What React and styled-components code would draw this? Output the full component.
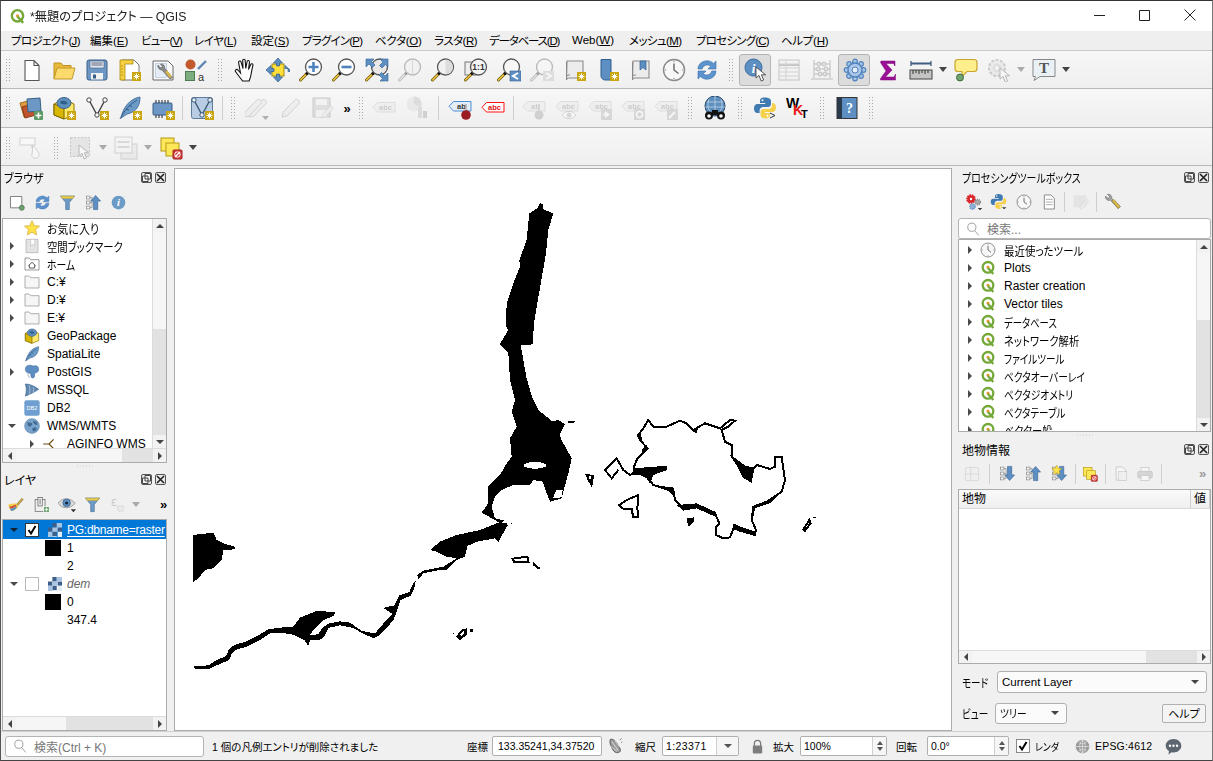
import React from "react";
import styled, { createGlobalStyle } from "styled-components";

const Global = createGlobalStyle`
  html, body { margin: 0; padding: 0; background: #f0f0f0; overflow: hidden; }
  * { box-sizing: border-box; }
  body { font-family: "Liberation Sans", "Noto Sans CJK JP", sans-serif; font-size: 12px; color: #000; font-feature-settings: "palt"; }
`;

const Win = styled.div`
  width: 1213px; height: 761px; display: flex; flex-direction: column; overflow: hidden;
  background: #f0f0f0; border-top: 1px solid #333; border-left: 1px solid #555; border-right: 1px solid #777; border-bottom: 1px solid #444;
`;
const TitleBar = styled.div`
  height: 30px; background: #fff; display: flex; align-items: center; padding-left: 8px; flex: none;
`;
const TitleText = styled.div`font-size: 12.5px; margin-left: 4px; flex: 1; color: #222; padding-bottom: 2px;`;
const WinBtn = styled.div`width: 45px; height: 30px; display: flex; align-items: center; justify-content: center; padding-bottom: 2px;`;
const MenuBar = styled.div`
  height: 20px; flex: none; display: flex; align-items: center; padding: 0 0 2px 10px; background: #efefef; border-bottom: 1px solid #c8c8c8;
`;
const MenuItem = styled.div`width: ${p => p.$w}px; font-size: 11.5px; white-space: nowrap; letter-spacing: ${p => p.$ls}px;
  u { text-underline-offset: 1px; }`;
const ToolRow = styled.div`
  height: ${p => p.$h}px; flex: none; display: flex; align-items: center; padding-top: ${p => p.$pt || 0}px;
  background: linear-gradient(#f7f7f7, #efefef); border-bottom: 1px solid #b9b9b9;
`;
const HandleBox = styled.div`width: ${p => p.$w || 14}px; height: 100%; flex: none; display: flex; align-items: center; justify-content: center;`;
const HandleDots = styled.div`
  width: 6px; height: 24px; background-image: radial-gradient(#a8a8a8 0.7px, transparent 0.9px); background-size: 3px 3px;
`;
const Btn = styled.div`
  width: ${p => p.$w || 33}px; height: 32px; flex: none; display: flex; align-items: center; justify-content: center; position: relative;
  svg { filter: ${p => p.$off ? "grayscale(1) opacity(.38)" : "none"}; }
  ${p => p.$on ? "&::before { content: ''; position: absolute; left: 0; right: 1px; top: 0; bottom: 0; background: #dcdcdc; border: 1px solid #b4b4b4; border-radius: 3px; } svg { position: relative; }" : ""}
`;
const Drop = styled.div`
  width: ${p => p.$w || 12}px; flex: none; display: flex; justify-content: center;
  &::after { content: ""; border-left: 4px solid transparent; border-right: 4px solid transparent; border-top: 5px solid ${p => p.$off ? "#aaa" : "#444"}; }
`;
const Sep = styled.div`
  width: ${p => p.$w || 8}px; height: 24px; flex: none; display: flex; justify-content: center;
  &::after { content: ""; width: 1px; height: 100%; background: #cfcfcf; }
`;
const More = styled.div`width: ${p => p.$w || 15}px; margin-left: ${p => p.$ml || 0}px; flex: none; font-size: 13px; font-weight: 700; text-align: center; color: ${p => p.$c || "#000"}; letter-spacing: -1px;`;

const Main = styled.div`
  flex: 1; min-height: 0; display: grid; grid-template-columns: 173px 778px 1fr;
`;
const Dock = styled.div`
  display: flex; flex-direction: column; min-height: 0; padding: ${p => p.$pad};
`;
const DockHead = styled.div`
  height: 20px; flex: none; display: flex; align-items: center; justify-content: space-between; padding: ${p => p.$pt || 1}px ${p => p.$pr || 1}px 0 ${p => p.$pl || 2}px; font-size: 12px;
`;
const Lbl = styled.span`display: inline-block; white-space: nowrap; transform: scaleX(${p => p.$sx || 1}); transform-origin: left center;`;
const DockBtns = styled.div`display: flex; gap: 3px; align-items: center;`;
const DockBtn = styled.div`
  width: 11px; height: 11px; border: 1px solid #555; border-radius: 2px; background: #e8e8e8; display: flex; align-items: center; justify-content: center;
`;
const PanelBar = styled.div`
  height: ${p => p.$h || 30}px; flex: none; display: flex; align-items: center; padding-left: ${p => p.$pl || 0}px;
`;
const Mini = styled.div`
  width: ${p => p.$w || 25}px; flex: none; display: flex; align-items: center; justify-content: center;
  svg { filter: ${p => p.$off ? "grayscale(1) opacity(.38)" : "none"}; }
`;
const MiniSep = styled.div`width: ${p => p.$w || 7}px; height: 20px; flex: none; display: flex; justify-content: center;
  &::after { content: ""; width: 1px; background: #cfcfcf; }`;
const TreeFrame = styled.div`
  height: ${p => p.$h}px; flex: ${p => p.$grow ? 1 : "none"}; min-height: 0; background: #fff; border: 1px solid #ababab; display: grid;
  grid-template-columns: 1fr ${p => p.$v ? "14px" : "0"}; grid-template-rows: 1fr ${p => p.$hs ? "14px" : "0"}; overflow: hidden;
`;
const TreeList = styled.div`overflow: hidden; min-width: 0; min-height: 0; padding-top: ${p => p.$pt || 0}px;`;
const Row = styled.div`
  height: 18px; display: flex; align-items: center; white-space: nowrap; position: relative;
  padding-left: ${p => p.$indent || 0}px;
  background: ${p => p.$sel ? "#0078d7" : "transparent"};
  color: ${p => p.$sel ? "#fff" : p.$dim ? "#666" : "#000"};
  font-style: ${p => p.$dim ? "italic" : "normal"};
  ${p => p.$sel ? "height: 19px;" : ""}
`;
const Caret = styled.div`
  width: ${p => p.$w || 22}px; flex: none; display: flex; justify-content: center; padding-left: ${p => p.$pl || 0}px; padding-right: ${p => p.$pr || 0}px;
  &::after {
    content: ""; display: ${p => p.$none ? "none" : "block"};
    ${p => p.$open
      ? "border-left: 4px solid transparent; border-right: 4px solid transparent; border-top: 4px solid #4a4a4a;"
      : "border-top: 4px solid transparent; border-bottom: 4px solid transparent; border-left: 4px solid #4a4a4a;"}
    ${p => p.$white ? "border-top-color: #123;" : ""}
  }
`;
const RowIcon = styled.div`width: 16px; height: 16px; flex: none; margin-right: ${p => p.$mr ?? 7}px; display: flex; align-items: center; justify-content: center;`;
const RowCheck = styled.div`
  width: 14px; height: 14px; flex: none; background: #fff; border: 1px solid ${p => p.$on ? "#333" : "#bbb"}; margin-right: 8px; display: flex; align-items: center; justify-content: center;
`;
const Swatch = styled.div`width: 16px; height: 16px; background: #000; flex: none; margin-right: 6px;`;
const SwatchGap = styled.div`width: 16px; flex: none; margin-right: 6px;`;
const Underlined = styled.span`text-decoration: underline; text-underline-offset: 2px; letter-spacing: -.25px;`;

const VBar = styled.div`
  grid-column: 2; grid-row: 1; display: flex; flex-direction: column; background: #f2f2f2; border-left: 1px solid #dcdcdc; min-height: 0;
`;
const HBar = styled.div`
  grid-column: 1 / -1; grid-row: 2; display: flex; background: #f2f2f2; border-top: 1px solid #dcdcdc; min-width: 0;
`;
const ScrollEnd = styled.div`
  flex: none; width: ${p => p.$h ? "13px" : "auto"}; height: ${p => p.$h ? "auto" : "13px"}; display: flex; align-items: center; justify-content: center;
  &::after { content: ""; ${p => ({
    up: "border-left:4px solid transparent;border-right:4px solid transparent;border-bottom:4px solid #444;",
    down: "border-left:4px solid transparent;border-right:4px solid transparent;border-top:4px solid #444;",
    left: "border-top:4px solid transparent;border-bottom:4px solid transparent;border-right:4px solid #444;",
    right: "border-top:4px solid transparent;border-bottom:4px solid transparent;border-left:4px solid #444;"
  })[p.$dir]} }
`;
const Track = styled.div`flex: ${p => p.$g}; background: ${p => p.$thumb ? "#e2e2e2" : "#f6f6f6"}; min-width: 0; min-height: 0;`;

const Canvas = styled.div`
  background: #fff; border: 1px solid #ababab; margin-top: 2px; overflow: hidden; display: flex;
`;
const Splitter = styled.div`
  height: 6px; flex: none; display: flex; justify-content: center; align-items: center;
  &::after { content: ""; width: 18px; height: 2px; background-image: radial-gradient(#aaa .6px, transparent .8px); background-size: 3px 2px; }
`;
const SearchBox = styled.div`
  height: ${p => p.$h || 21}px; width: ${p => p.$w ? p.$w + "px" : "auto"}; flex: none; margin: ${p => p.$mt || 0}px 0 0 ${p => p.$ml || 0}px; display: flex; align-items: center; gap: 7px; padding-left: 7px; background: #fff;
  border: 1px solid #b4b4b4; border-radius: 3px; color: #777; font-size: 12px; white-space: nowrap;
`;
const Table = styled.div`flex: none; height: 175px; background: #fff; border: 1px solid #ababab; display: flex; flex-direction: column;`;
const TableHead = styled.div`height: 19px; flex: none; display: flex; background: linear-gradient(#fafafa, #efefef); border-bottom: 1px solid #d8d8d8;`;
const HeadCell = styled.div`
  width: ${p => p.$w ? p.$w + "px" : "auto"}; flex: ${p => p.$w ? "none" : 1}; padding-left: 3px; border-right: 1px solid #d0d0d0; font-size: 12px; line-height: 18px;
`;
const TableBody = styled.div`flex: 1;`;
const TableScroll = styled.div`height: 13px; flex: none; display: flex; background: #f2f2f2; border-top: 1px solid #dcdcdc;`;
const FormRow = styled.div`
  flex: none; display: flex; align-items: center; height: ${p => p.$h}px;
`;
const FormLabel = styled.div`font-size: 12px; width: ${p => p.$w}px; flex: none; padding-left: 4px; white-space: nowrap;`;
const Combo = styled.div`
  width: ${p => p.$w ? p.$w + "px" : "auto"}; flex: ${p => p.$w ? "none" : 1}; height: ${p => p.$h || 22}px; background: #fbfbfb; border: 1px solid #b0b0b0; border-radius: 3px;
  display: flex; align-items: center; padding: 0 5px 0 4px; justify-content: space-between; font-size: 11.5px; margin-right: ${p => p.$mr || 0}px; white-space: nowrap;
  &::after { content: ""; border-left: 4px solid transparent; border-right: 4px solid transparent; border-top: 4px solid #444; margin-right: 2px; }
`;
const PushBtn = styled.div`
  width: 44px; height: 19px; margin-left: auto; margin-right: 5px; background: #f4f4f4; border: 1px solid #b0b0b0; border-radius: 2px; font-size: 11px; display: flex; align-items: center; justify-content: center;
`;

const StatusBar = styled.div`
  height: 29px; flex: none; display: flex; align-items: center; font-size: 10.5px; background: #f0f0f0; border-top: 1px solid #d0d0d0;
`;
const StatusText = styled.div`
  margin-left: ${p => p.$ml || 0}px; width: ${p => p.$w}px; flex: none; white-space: nowrap; letter-spacing: ${p => p.$ls || 0}px;
`;
const Field = styled.div`
  width: ${p => p.$w}px; height: 20px; flex: none; margin-left: ${p => p.$ml || 0}px; background: #fff; border: 1px solid #b0b0b0; border-radius: 2px; display: flex; align-items: center; justify-content: space-between;
  padding-left: ${p => p.$pl || 3}px; letter-spacing: ${p => p.$ls || 0}px; font-size: 10.5px; white-space: nowrap; overflow: hidden;
`;
const Spin = styled.div`
  width: 14px; height: 100%; border-left: 1px solid #d0d0d0; display: flex; flex-direction: column; align-items: center; justify-content: center; gap: 2px; background: #f6f6f6;
  &::before { content: ""; border-left: 3.5px solid transparent; border-right: 3.5px solid transparent; border-bottom: 4px solid #555; }
  &::after { content: ""; border-left: 3.5px solid transparent; border-right: 3.5px solid transparent; border-top: 4px solid #555; }
`;
const FieldDrop = styled.div`
  width: 22px; height: 100%; border-left: 1px solid #d0d0d0; display: flex; align-items: center; justify-content: center; background: #f6f6f6;
  &::after { content: ""; border-left: 4px solid transparent; border-right: 4px solid transparent; border-top: 4px solid #555; }
`;
const StatusIcon = styled.div`width: ${p => p.$w}px; margin-left: ${p => p.$ml || 0}px; flex: none; display: flex; justify-content: center; align-items: center;`;
const StatusCheck = styled.div`
  width: 14px; height: 14px; margin-left: ${p => p.$ml || 0}px; flex: none; background: #fff; border: 1px solid #888; display: flex; align-items: center; justify-content: center;
`;

/* ---------- icons ---------- */
const B = ({ x = 15, y = 15 }) => (
  <g>
    <rect x={x} y={y} width="9" height="9" fill="#c9a50f" />
    <path d={`M${x + 4.5} ${y + 1.5}v6M${x + 1.5} ${y + 4.5}h6M${x + 2.4} ${y + 2.4}l4.2 4.2M${x + 6.6} ${y + 2.4}l-4.2 4.2`} stroke="#fff" strokeWidth="1" />
  </g>
);
const Glass = ({ children, fill = "#f4f4f4" }) => (
  <g>
    <path d="M8 15.5L1.5 22" stroke="#6b5a14" strokeWidth="3" strokeLinecap="round" />
    <path d="M8 15.5L1.5 22" stroke="#f2c53c" strokeWidth="1.6" strokeLinecap="round" />
    <circle cx="8" cy="15.5" r="1.6" fill="#111" />
    <circle cx="14.5" cy="9" r="8" fill={fill} stroke="#555" strokeWidth="1.3" />
    {children}
  </g>
);
const Tag = ({ fill = "#e8e8dc", stroke = "#b9b9a6", txt = "abc", col = "#888" }) => (
  <g>
    <path d="M5.5 2.500H23v9.500H5.500L1 7.300z" fill={fill} stroke={stroke} />
    <text x="13.5" y="10" fontSize="7.500" fontWeight="700" textAnchor="middle" fill={col} fontFamily="Liberation Sans">{txt}</text>
  </g>
);
const LowTag = (props) => <g transform="translate(0 3)"><Tag {...props} /></g>;
const Q = () => (
  <g>
    <circle cx="12" cy="11" r="8" fill="#fff" stroke="#74a838" strokeWidth="3.4" />
    <circle cx="12" cy="11" r="2.2" fill="#e8962e" />
    <path d="M12 12l8 9" stroke="#74a838" strokeWidth="3.4" />
  </g>
);
const Clock = () => (
  <g>
    <circle cx="12" cy="12" r="10.5" fill="#f7f7f7" stroke="#8a8a8a" strokeWidth="1.4" />
    <path d="M12 5.5V12l4.5 3.5" fill="none" stroke="#666" strokeWidth="1.4" />
    <path d="M12 2.8v1.4M12 19.8v1.4M2.8 12h1.4M19.8 12h1.4" stroke="#8a8a8a" />
  </g>
);
const Refresh = () => (
  <g fill="#5c93cf" stroke="#3a6ea8" strokeWidth=".6">
    <path d="M3 11C3 5 9 2 14 3c2 .4 3.5 1.4 4.4 2.4L21 3v8h-8l2.6-2.8C14.8 7.4 13.6 7 12.3 7 9.6 7 7.8 8.7 7.2 11z" />
    <path d="M21 13c0 6-6 9-11 8-2-.4-3.5-1.4-4.4-2.4L3 21v-8h8l-2.6 2.8c.8.8 2 1.2 3.3 1.2 2.7 0 4.5-1.7 5.1-4z" />
  </g>
);
const Funnel = () => (
  <g>
    <path d="M2 3h20l-7.5 9v10h-5V12z" fill="#6d9bc7" stroke="#46709a" />
    <path d="M2 3h20l-2.6 3.2H4.6z" fill="#f2d04c" stroke="#b79b2a" strokeWidth=".6" />
  </g>
);
const Python = () => (
  <g>
    <path d="M12 1.5c-4 0-5 1.4-5 3.4V7h5.2v1H4.4C2.4 8 1 9.6 1 12.5S2.4 17 4.4 17h2.2v-2.6c0-2 1.7-3.4 3.6-3.4h5c1.7 0 2.8-1.2 2.8-2.9V4.9C18 2.9 16 1.5 12 1.5z" fill="#3f7ab0" />
    <circle cx="9.5" cy="4.2" r="1" fill="#fff" />
    <path d="M12 22.5c4 0 5-1.4 5-3.4V17h-5.2v-1h7.8c2 0 3.4-1.6 3.4-4.5S21.6 7 19.6 7h-.6v2.6c0 2-1.7 3.4-3.6 3.4h-5c-1.7 0-2.8 1.2-2.8 2.9v3.2c0 2 2 3.4 6 3.4z" fill="#f5d04a" />
    <circle cx="14.5" cy="19.8" r="1" fill="#fff" />
  </g>
);
const Cursor = ({ x = 12, y = 10 }) => (
  <path transform={`translate(${x} ${y})`} d="M0 0v11l3-2.6L5.2 14l2.4-1-2.2-5.2H9.6z" fill="#fff" stroke="#444" strokeWidth=".9" />
);
const Lines = ({ stroke = "#888" }) => (
  <g stroke={stroke} fill="none"><path d="M3 6h18M3 10h18M3 14h18M3 18h18M9 3v18" /></g>
);
const Map2 = () => (
  <g>
    <path d="M4 3h16v17H6c-2 0-2.500 1-2.500 2z" fill="#ececec" stroke="#8a8a8a" strokeWidth="1.1" />
    <path d="M3.500 22V4M3.500 19c0-1.500 1-2 2.500-2h1" fill="none" stroke="#888" />
  </g>
);
const Doc = () => <path d="M5 1.5h10l5 5v16H5z" fill="#fff" stroke="#666" strokeWidth="1.1" />;
const Raster = ({ a = "#3d72ad", b = "#a9c5e2" }) => (
  <g>
    <path d="M0 5h5v5H0zM5 0h5v5H5zM5 10h5v5H5zM11 5h5v5h-5zM11 15h-1" fill={a} />
    <path d="M10 0h6v5h-6zM0 10h5v6H0zM5 5h6v5H5z" fill={b} />
    <path d="M5 15h5v1H5zM11 10h5v6h-5z" fill="#e4edf6" />
  </g>
);
const Db = ({ c = "#d9b600" }) => (
  <g>
    <path d="M2 8l10-5 10 5v11l-10 4-10-4z" fill="#ffe96d" stroke="#8a7400" />
    <path d="M2 8l10 4v11l-10-4z" fill={c} stroke="#7a6600" />
    <ellipse cx="12" cy="7" rx="7" ry="5.5" fill="#5f8fbd" stroke="#3b6590" />
    <path d="M8 5c2 1 3-1 5 0s3 2 2 3-4 0-6 0z" fill="#2e5f8c" />
  </g>
);
const Feather = () => (
  <g>
    <path d="M3 22C5 12 11 3 22 1c0 8-3 15-13 17z" fill="#6d9bc7" stroke="#3f6b97" strokeWidth=".9" />
    <path d="M2 23C6 15 11 9 19 4M8 13l3 1M11 9l3 2" fill="none" stroke="#2c5480" strokeWidth=".9" />
  </g>
);
const Vee = ({ c = "#444", f = "#fff" }) => (
  <g>
    <path d="M4 4l8 15 8-15" fill="none" stroke={c} strokeWidth="1.4" />
    <circle cx="4" cy="4" r="2.2" fill={f} stroke={c} />
    <circle cx="12" cy="19" r="2.2" fill={f} stroke={c} />
    <circle cx="20" cy="4" r="2.2" fill={f} stroke={c} />
  </g>
);
const Leaf = () => (
  <g>
    <path d="M4 21L20 5" stroke="#aaa" strokeWidth="1" />
    <path d="M4 21l1.2-5L17 3.8c1-.8 2.5-.5 3.5.5s1.2 2.4.4 3.4L9 20z" fill="#e3e3e3" stroke="#999" />
  </g>
);
const DbTree = () => (
  <g stroke="#888" fill="#f7f7f7"><rect x="2" y="3" width="5" height="4" /><rect x="2" y="10" width="5" height="4" /><rect x="2" y="17" width="5" height="4" /><path fill="none" d="M7 5h3M7 12h3M7 19h3M10 5v14" /></g>
);
const ArrowUp = () => <path d="M15 2l7 8h-4v12h-6V10H8z" fill="#5e8fc3" stroke="#2f5e91" strokeWidth=".8" />;
const ArrowDown = () => <path d="M15 22l7-8h-4V2h-6v12H8z" fill="#5e8fc3" stroke="#2f5e91" strokeWidth=".8" />;
const Squares = () => (
  <g>
    <rect x="2" y="2" width="13" height="13" fill="#ffe75a" stroke="#b39a10" />
    <rect x="7" y="7" width="13" height="13" fill="#ffe75a" stroke="#b39a10" />
    <rect x="14" y="14" width="9" height="9" rx="1" fill="#d53a3a" stroke="#a02020" />
    <path d="M16 21l5-5" stroke="#fff" strokeWidth="1.5" />
    <circle cx="18.5" cy="18.5" r="2.7" fill="none" stroke="#fff" />
  </g>
);

const I = {
  win: <Q />,
  new: <path d="M6 2.5h9l5 5v15H6z M15 2.5v5h5" fill="#fff" stroke="#555" strokeWidth="1.1" />,
  open: (
    <g>
      <path d="M2 21V5h7l2 2.5h8V11" fill="#e8b93a" stroke="#bd9222" />
      <path d="M2 21l3-11h18l-3 11z" fill="#fbd96a" stroke="#c29a2a" />
    </g>
  ),
  save: (
    <g>
      <rect x="2" y="2" width="20" height="20" rx="2" fill="#6f97c4" stroke="#3a5f87" />
      <path d="M5 3h14v7H5z" fill="#dfe7f0" stroke="#3a5f87" strokeWidth=".6" />
      <path d="M6.5 5h11M6.5 7h11" stroke="#667" />
      <path d="M6 15h12v6.5H6z" fill="#f2f2f2" />
      <path d="M8 16.5h3v4H8z" fill="#3a5f87" />
    </g>
  ),
  layout: (
    <g>
      <path d="M4 2h12l5 5v15H4z" fill="#fff" stroke="#777" />
      <path d="M2 2h13v4H7v16H2z" fill="#f5d03f" stroke="#a98b10" strokeWidth=".8" />
      <path d="M3 8h2M3 11h2M3 14h2M3 17h2" stroke="#a98b10" strokeWidth=".8" />
      <B x={14} y={14} />
    </g>
  ),
  mgr: (
    <g>
      <path d="M2 3h15l5 5v14H2z" fill="#fafafa" stroke="#666" />
      <path d="M4.500 5.500h11v14h-11z" fill="#e4edf6" stroke="#aabbcc" strokeWidth=".6" />
      <path d="M7 7a4 4 0 0 0 4 5l8 9 2.500-1.500L13.500 10c.5-2-1-4.500-4-4l2 2.500-1.500 1.500L7.500 8z" fill="#8a8a8a" stroke="#444" strokeWidth=".5" />
      <path d="M14 14l5 6 2-1.200-4.600-6.200z" fill="#d9b84a" />
    </g>
  ),
  style: (
    <g>
      <circle cx="6.500" cy="6.500" r="5" fill="#c25a2e" />
      <path d="M14 11l8-8" stroke="#5b86b3" strokeWidth="2.400" />
      <rect x="1.500" y="13.500" width="9" height="9" fill="#7bad7f" stroke="#4d7a52" />
      <text x="17" y="23" fontSize="11" textAnchor="middle" fill="#333" fontFamily="Liberation Sans">a</text>
    </g>
  ),
  hand: <path d="M9.500 23C8 20.500 4 16 2.500 13.500c-1-1.600 1.400-2.800 2.500-1.500L7.500 15 5.600 4.600c-.3-1.700 2-2.200 2.500-.5l1.900 6.400-.3-8c0-1.700 2.400-1.700 2.500 0l.6 8 1.300-7c.3-1.700 2.500-1.200 2.400.4l-1 7.600 2.200-5c.7-1.400 2.600-.7 2.200.8-.7 3-1.500 6.600-1.800 9-.3 2.400-1 4.100-2 6.700z" fill="#fff" stroke="#111" strokeWidth="1.100" />,
  pansel: (
    <g>
      <rect x="6" y="6" width="12" height="12" fill="#ffdf3a" stroke="#9d8a10" />
      <g fill="#5e8fc3" stroke="#2f5e91" strokeWidth=".7">
        <path d="M12 0l4.500 5h-3v3h-3V5h-3zM12 24l4.500-5h-3v-3h-3v3h-3zM0 12l5-4.500v3h3v3H5v3zM24 12l-5-4.500v3h3v3h3v3z" />
      </g>
    </g>
  ),
  zin: <Glass fill="#fff"><path d="M14.500 4v10M9.500 9h10" stroke="#4f82bd" strokeWidth="2.600" /></Glass>,
  zout: <Glass fill="#fff"><path d="M9.500 9h10" stroke="#4f82bd" strokeWidth="2.600" /></Glass>,
  zfull: (
    <g>
      <Glass fill="#e8e8e8" />
      <g fill="#5e8fc3" stroke="#2f5e91" strokeWidth=".6">
        <path d="M1 1h8L6.500 3.500 10 7l-2.500 2.500L4 6 1 9zM23 1v8l-2.500-2.500L17 10l-2.500-2.500L18 4l-3-3zM23 23h-8l2.500-2.500L14 17l2.500-2.500L20 18l3-3z" />
      </g>
    </g>
  ),
  zsel: <Glass fill="#eee"><path d="M14.500 1v16" stroke="#aaa" /></Glass>,
  zlayer: <Glass fill="#f2f2f2"><path d="M14.500 1.500a7.500 7.500 0 0 1 0 15z" fill="#ddd" /></Glass>,
  znat: (
    <g>
      <rect x="1" y="4" width="11" height="13" fill="#eee" stroke="#777" />
      <Glass fill="#f4f4f4"><text x="14.500" y="12" fontSize="8.500" fontWeight="700" textAnchor="middle" fill="#333" fontFamily="Liberation Sans">1:1</text></Glass>
    </g>
  ),
  zlast: (
    <g>
      <Glass fill="#f7f7f7" />
      <rect x="13" y="13" width="11" height="10" fill="#5e8fc3" stroke="#2f5e91" strokeWidth=".6" />
      <path d="M21 15l-5 3 5 3" fill="none" stroke="#fff" strokeWidth="2" />
    </g>
  ),
  znext: (
    <g>
      <Glass fill="#f7f7f7" />
      <rect x="13" y="13" width="11" height="10" fill="#bbb" />
      <path d="M16 15l5 3-5 3" fill="none" stroke="#fff" strokeWidth="2" />
    </g>
  ),
  newmap: <g><Map2 /><B x={14} y={14} /></g>,
  newbm: (
    <g>
      <path d="M5 1.500h10v17L19 22H9c-2 0-4-2-4-4z" fill="#5e8fc3" stroke="#2f5e91" />
      <B x={14} y={14} />
    </g>
  ),
  showbm: (
    <g>
      <Map2 />
      <path d="M11 3h6v9l-3-2.500L11 12z" fill="#5e8fc3" stroke="#2f5e91" strokeWidth=".7" />
    </g>
  ),
  clock: <Clock />,
  refresh: <Refresh />,
  identify: (
    <g>
      <circle cx="9.500" cy="9.500" r="8.500" fill="#5e8fc3" stroke="#3b6b9e" />
      <text x="9.500" y="14.500" fontSize="13" fontWeight="700" fontStyle="italic" textAnchor="middle" fill="#fff" fontFamily="Liberation Serif">i</text>
      <Cursor x={12} y={9} />
    </g>
  ),
  table: (
    <g>
      <rect x="2" y="2" width="20" height="20" fill="#f2f2f2" stroke="#777" />
      <path d="M2 7h20" stroke="#777" strokeWidth="2" />
      <Lines stroke="#999" />
    </g>
  ),
  abacus: (
    <g fill="none" stroke="#666">
      <path d="M4 2v18M20 2v18M1 21h22M4 6h16M4 11h16M4 16h16" />
      <g fill="#ccc"><circle cx="9" cy="6" r="2" /><circle cx="14" cy="6" r="2" /><circle cx="8" cy="11" r="2" /><circle cx="16" cy="11" r="2" /><circle cx="10" cy="16" r="2" /><circle cx="15" cy="16" r="2" /></g>
    </g>
  ),
  gear: (
    <g>
      <g fill="#a9c6e8" stroke="#4f82bd" strokeWidth="1.200">
        <circle cx="12" cy="3.500" r="2.300" /><circle cx="12" cy="20.500" r="2.300" /><circle cx="3.500" cy="12" r="2.300" /><circle cx="20.500" cy="12" r="2.300" />
        <circle cx="6" cy="6" r="2.300" /><circle cx="18" cy="6" r="2.300" /><circle cx="6" cy="18" r="2.300" /><circle cx="18" cy="18" r="2.300" />
      </g>
      <circle cx="12" cy="12" r="7" fill="#a9c6e8" stroke="#4f82bd" strokeWidth="1.300" />
      <circle cx="12" cy="12" r="3" fill="#e6eef7" stroke="#4f82bd" />
    </g>
  ),
  sigma: <path d="M5 3h14v5l-1.500-2.500H10l6 6.500-6.500 7H18l1.500-3V22H4.500v-1.500L10 13 4.500 4.500z" fill="#9b0f96" stroke="#7a0b76" strokeWidth=".5" />,
  ruler: (
    <g>
      <path d="M2 3v5M22 3v5" stroke="#3f5c7e" strokeWidth="1.300" /><path d="M2 5.500h20" stroke="#3f5c7e" strokeWidth="2" />
      <rect x="1" y="12" width="22" height="9" fill="#c4c4c4" stroke="#444" />
      <path d="M4 12v4M7 12v3M10 12v4M13 12v3M16 12v4M19 12v3" stroke="#333" />
    </g>
  ),
  note: (
    <g>
      <path d="M4 1.500h16c2 0 3 1 3 3v6c0 2-1 3-3 3h-7l-5 5v-5H4c-2 0-3-1-3-3v-6c0-2 1-3 3-3z" fill="#ffee8c" stroke="#c9a52c" strokeWidth="1.200" />
      <circle cx="6" cy="19.500" r="3.500" fill="#6fa36f" stroke="#3f6b3f" />
    </g>
  ),
  action: (
    <g>
      <circle cx="10" cy="10" r="8" fill="#ddd" stroke="#888" strokeDasharray="3 1.500" strokeWidth="2" />
      <circle cx="10" cy="10" r="4.500" fill="#bbb" />
      <path d="M8.500 7.500v5l4-2.500z" fill="#fff" />
      <Cursor x={13} y={10} />
    </g>
  ),
  textnote: (
    <g>
      <path d="M1 1.500h22v17H8l-6 4 1.500-4H1z" fill="#eaf1f5" stroke="#888" />
      <text x="12" y="15" fontSize="15" fontWeight="700" textAnchor="middle" fill="#555" fontFamily="Liberation Serif">T</text>
    </g>
  ),
  dsm: (
    <g>
      <path d="M1 7l12-3 4 14-12 3z" fill="#e19a3c" stroke="#9f6a1f" />
      <path d="M3 11l11-3 3 11-11 3z" fill="#c0552d" stroke="#8a3a1c" />
      <path d="M8 3l13-1 1 13-13 1z" fill="#6d97c4" stroke="#3a5f87" />
      <rect x="15" y="15" width="9" height="9" rx="1" fill="#5d9a63" />
      <path d="M19.500 16.500v6M16.500 19.500h6" stroke="#fff" strokeWidth="1.600" />
    </g>
  ),
  gpkg: <g><Db /><B /></g>,
  shp: <g><Vee /><B /></g>,
  feather: <g><Feather /><B /></g>,
  chip: (
    <g>
      <rect x="2" y="7" width="19" height="12" rx="1" fill="#6d97c4" stroke="#3a5f87" />
      <path d="M5 4v3M8 4v3M11 4v3M14 4v3M17 4v3M5 19v3M8 19v3M11 19v3" stroke="#334" strokeWidth="1.100" />
      <B />
    </g>
  ),
  vedit: (
    <g>
      <rect x="1.500" y="1.500" width="21" height="21" rx="2" fill="#b8cde4" stroke="#5e7d9e" />
      <Vee c="#3d5a78" f="#e6eef7" />
      <B />
    </g>
  ),
  pencils: <g><Leaf /><g transform="translate(-5 0)"><Leaf /></g><path d="M17 20h7l-3.500 4z" fill="#444" /></g>,
  pencil: <Leaf />,
  saveedit: (
    <g>
      <rect x="2" y="2" width="17" height="19" fill="#bbb" stroke="#888" />
      <rect x="5" y="3" width="11" height="6" fill="#eee" />
      <path d="M5 14h11v7H5z" fill="#eee" />
      <g transform="translate(8 8) scale(.65)"><Leaf /></g>
    </g>
  ),
  abc: <g transform="translate(0 4)"><Tag /></g>,
  pie: (
    <g>
      <circle cx="9" cy="8" r="7.500" fill="#d8d8c8" />
      <path d="M9 8V.500A7.500 7.500 0 0 1 16 11z" fill="#aeb9a5" />
      <rect x="13" y="11" width="4" height="11" fill="#b8b8b8" /><rect x="18" y="15" width="4" height="7" fill="#999" />
    </g>
  ),
  abpin: (
    <g>
      <LowTag fill="#e2edf8" stroke="#4f8fd6" txt="ab" col="#333" />
      <path d="M18 8v8" stroke="#aaa" strokeWidth="1.500" />
      <circle cx="18" cy="19" r="4.800" fill="#9c1c24" />
    </g>
  ),
  abcred: <g transform="translate(0 4)"><Tag fill="#fff" stroke="#ff1010" col="#e01010" /></g>,
  lblpin: <g><LowTag txt="ab" /><path d="M17 8v8" stroke="#999" strokeWidth="1.500" /><circle cx="17" cy="19" r="4.500" fill="#999" /></g>,
  lbleye: <g><LowTag /><path d="M7 19c4-5 10-5 14 0-4 5-10 5-14 0z" fill="#fff" stroke="#999" /><circle cx="14" cy="19" r="2.500" fill="#aaa" /></g>,
  lblmove: <g><LowTag /><rect x="13" y="13" width="11" height="11" fill="#aaa" /><path d="M15 18.500h4M17 16l3.500 2.500L17 21" stroke="#fff" strokeWidth="1.600" fill="none" /></g>,
  lblrot: <g><LowTag /><rect x="13" y="13" width="11" height="11" fill="#aaa" /><circle cx="18.500" cy="18.500" r="3" fill="none" stroke="#fff" strokeWidth="1.500" /></g>,
  lbledit: <g><LowTag /><rect x="13" y="13" width="11" height="11" fill="#aaa" /><path d="M15 22l6-6" stroke="#fff" strokeWidth="2" /></g>,
  binoc: (
    <g>
      <circle cx="12" cy="10" r="10" fill="#5f8fbd" stroke="#24476b" />
      <path d="M4 6h16M2 11h20M12 0v17M6 3c-2 6-1 10 2 14M18 3c2 6 1 10-2 14" stroke="#bcd2e8" strokeWidth=".8" fill="none" />
      <circle cx="6" cy="19.500" r="4" fill="#111" /><circle cx="18" cy="19.500" r="4" fill="#111" />
      <circle cx="6" cy="20" r="1.800" fill="#fff" /><circle cx="18" cy="20" r="1.800" fill="#fff" />
      <rect x="9" y="14" width="6" height="5" fill="#111" />
    </g>
  ),
  python: <g><Python /><path d="M17 17l5 2.500-5 2.500" stroke="#333" fill="none" /></g>,
  wkt: (
    <g fontFamily="Liberation Sans" fontWeight="700">
      <text x="0" y="12" fontSize="14" fill="#000">W</text>
      <text x="7" y="19" fontSize="14" fill="#e81818">K</text>
      <text x="15" y="22" fontSize="11" fill="#000">T</text>
    </g>
  ),
  help: (
    <g>
      <rect x="2" y="1.500" width="20" height="21" fill="#5e8fc3" stroke="#333" />
      <rect x="2" y="1.500" width="5" height="21" fill="#2b3a4a" />
      <text x="14.500" y="17" fontSize="14" fontWeight="700" textAnchor="middle" fill="#fff" fontFamily="Liberation Serif">?</text>
    </g>
  ),
  rectpick: (
    <g>
      <rect x="1" y="2" width="15" height="7" fill="#fff" stroke="#999" />
      <path d="M14 9l5 7c2 2 1 5-1 6-3 1-6-1-5-4z" fill="#fff" stroke="#999" />
      <path d="M13 9v3" stroke="#7070c0" />
    </g>
  ),
  select: (
    <g>
      <rect x="1.500" y="1.500" width="19" height="19" fill="#ccc" stroke="#777" strokeDasharray="2 1.500" />
      <Cursor x={10} y={9} />
    </g>
  ),
  form: (
    <g>
      <rect x="7" y="8" width="16" height="15" fill="#ddd" stroke="#999" />
      <rect x="1" y="1" width="17" height="16" fill="#f2f2f2" stroke="#999" />
      <path d="M3.500 6h12M3.500 11h12" stroke="#aaa" strokeWidth="2" />
    </g>
  ),
  deselect: <Squares />,
  add: (
    <g>
      <path d="M3.500 3.500h16v16h-16z" fill="#fff" stroke="#777" strokeWidth="1.300" />
      <circle cx="19.500" cy="19.500" r="3.500" fill="#6fa36f" stroke="#3f6b3f" />
    </g>
  ),
  filter: <Funnel />,
  collapse: <g><DbTree /><ArrowUp /></g>,
  expand: <g><DbTree /><ArrowDown /></g>,
  info: (
    <g>
      <circle cx="12" cy="12" r="11" fill="#6d9bc7" />
      <text x="12" y="18" fontSize="17" fontWeight="700" fontStyle="italic" textAnchor="middle" fill="#fff" fontFamily="Liberation Serif">i</text>
    </g>
  ),
  star: <path d="M12 1l3.300 7.400 8 .8-6 5.300 1.800 8L12 18.300 4.900 22.500l1.800-8-6-5.300 8-.8z" fill="#ffe24a" stroke="#c9a52c" />,
  bookmark: <g><path d="M3 2h18v20H3z" fill="#e4e4e4" stroke="#aaa" /><path d="M10 2h6v10l-3-2.500L10 12z" fill="#fff" stroke="#99a" strokeWidth=".6" /></g>,
  home: (
    <g>
      <path d="M1.500 5.500V21h21V5.500H10L8 3H1.500z" fill="#fff" stroke="#666" />
      <path d="M6.500 14.500l5.500-5 5.500 5M8 13.500V18h8v-4.500" fill="none" stroke="#333" strokeWidth="1.200" />
    </g>
  ),
  folder: <path d="M1.500 21V3H8l2 2.500h12.500V21z" fill="#f6f6f6" stroke="#8a8a8a" />,
  geopkg: <Db />,
  spatial: <Feather />,
  pg: (
    <g fill="#5e8fc3" stroke="#2f5e91" strokeWidth=".7">
      <path d="M2 8c0-5 4-7 8-6 2 .5 3 1 4 1 3-1 8-1 8 5 0 4-3 6-6 5v5c0 3-4 4-5 2-1-2-1-5-1-7-3 2-8 0-8-5z" />
      <path d="M6 15c0 3 1 5 3 5" fill="none" />
    </g>
  ),
  mssql: (
    <g>
      <path d="M2 3c6 0 14 3 20 8-6 4-14 8-20 10 2-6 2-12 0-18z" fill="#6089b3" stroke="#3c6288" />
      <path d="M8 5c1 4 1 9 0 14M14 8c.6 2 .6 5 0 8" stroke="#c5d5e5" fill="none" />
    </g>
  ),
  db2: (
    <g>
      <rect x="0.500" y="0.500" width="23" height="23" rx="3" fill="#6f9fd0" />
      <text x="12" y="15" fontSize="8.500" textAnchor="middle" fill="#fff" fontFamily="Liberation Sans">DB2</text>
    </g>
  ),
  wms: (
    <g>
      <circle cx="12" cy="12" r="11" fill="#7ba4cc" stroke="#567ea6" />
      <path d="M5 6c3 2 5 0 7 2s-2 5-4 5-3-3-3-7zM14 4c3 0 6 2 6 5s-3 1-4 0-3-3-2-5zM13 15c3-1 6-1 6 1s-3 5-5 4-2-4-1-5z" fill="#3f6a93" />
    </g>
  ),
  wmsitem: <path d="M2 12h10M12 12l8-8M12 12l8 8" stroke="#6b4a10" strokeWidth="2" fill="none" />,
  rasterB: <g transform="scale(1.500)"><Raster a="#3f5f8a" b="#a9c5e2" /></g>,
  q: <Q />,
  brush: (
    <g>
      <path d="M13 12l8-9 2 2-8 9z" fill="#c8a24a" stroke="#846a20" strokeWidth=".6" />
      <path d="M2 12c4-1 8-2 11-1l3 4c-2 3-6 6-10 6-2-2-4-6-4-9z" fill="#f2cf46" />
      <path d="M3 15c3 0 6-1 9-3l1.500 2c-3 2-6 3-9 3.500z" fill="#d04a3f" />
      <path d="M4 18c3-.5 6-2 9-3l1 1c-2 3-5 5-8 5z" fill="#5e8fc3" />
    </g>
  ),
  clip: (
    <g>
      <rect x="3" y="5" width="14" height="17" fill="#eee" stroke="#666" />
      <rect x="7" y="2" width="6" height="12" fill="#fff" stroke="#555" />
      <rect x="9" y="4" width="2" height="8" fill="#999" />
      <rect x="15" y="15" width="8" height="8" fill="#6fa36f" stroke="#fff" />
      <path d="M19 16.500v5M16.500 19h5" stroke="#fff" strokeWidth="1.200" />
    </g>
  ),
  eye: (
    <g>
      <path d="M0 11c6-8 16-8 23 0-7 8-17 8-23 0z" fill="#dcdcdc" stroke="#888" />
      <circle cx="11.500" cy="10.500" r="5" fill="#5e8fc3" stroke="#2f5e91" />
      <circle cx="11.500" cy="10.500" r="2" fill="#123" />
      <path d="M17 19h7l-3.500 4z" fill="#333" />
    </g>
  ),
  epsilon: (
    <g>
      <text x="6" y="15" fontSize="18" textAnchor="middle" fill="#888" fontFamily="DejaVu Sans">ε</text>
      <path d="M11 15h10l-1.500 8h-7z" fill="#ddd" stroke="#aaa" />
    </g>
  ),
  procrun: (
    <g>
      <circle cx="8" cy="8" r="5" fill="#d8262a" stroke="#d8262a" strokeDasharray="2 1" strokeWidth="3" />
      <circle cx="8" cy="8" r="1.600" fill="#fff" />
      <circle cx="17" cy="12" r="3.500" fill="#aaa" stroke="#888" strokeDasharray="1.500 1" strokeWidth="2" />
      <circle cx="10" cy="18" r="3.500" fill="#8fb1d8" stroke="#6d97c4" strokeDasharray="1.500 1" strokeWidth="2" />
      <path d="M17 20h6l-3 3z" fill="#333" />
    </g>
  ),
  pyarrow: <g><Python /><path d="M17 20h6l-3 3z" fill="#333" /></g>,
  doc: <g><Doc /><path d="M7.500 8h10M7.500 12h10M7.500 16h10" stroke="#888" /></g>,
  editproc: (
    <g>
      <path d="M1 2h18l4 9-4 9H1z" fill="#d8d2b4" />
      <path d="M10 21L21 8l2 2-10 13z" fill="#eee" stroke="#aaa" />
    </g>
  ),
  wrench: (
    <g>
      <path d="M2 5a5 5 0 0 0 7 5l11 12 3-3L11 8c1-3-2-7-6-6l3 3-2 3-3-3z" fill="#aaa" stroke="#444" strokeWidth=".7" />
      <path d="M11 11l9 11 3-3-9-10z" fill="#d9b84a" stroke="#7a6520" strokeWidth=".6" />
    </g>
  ),
  tree: (
    <g fill="#eee" stroke="#999"><rect x="2" y="2" width="20" height="20" rx="2" /><path d="M2 12h20M10 2v20" /></g>
  ),
  staron: (
    <g>
      <DbTree /><ArrowDown />
      <path d="M8 0l2 4.500 5 .5-3.600 3.300 1 5L8 11 3.600 13.300l1-5L1 5l5-.500z" fill="#ffe24a" stroke="#b3961a" strokeWidth=".7" />
    </g>
  ),
  copy: <g><Doc /><rect x="9" y="9" width="13" height="14" fill="#eee" stroke="#888" /></g>,
  print: (
    <g>
      <rect x="6" y="2" width="12" height="7" fill="#fff" stroke="#777" />
      <rect x="1" y="8" width="22" height="10" rx="2" fill="#aaa" stroke="#777" />
      <rect x="6" y="14" width="12" height="8" fill="#fff" stroke="#777" />
    </g>
  ),
  epsg: (
    <g>
      <circle cx="12" cy="12" r="11" fill="#9a9a9a" />
      <path d="M1 12h22M12 1v22M5 4c4 5 10 5 14 0M5 20c4-5 10-5 14 0M12 1c-6 6-6 16 0 22M12 1c6 6 6 16 0 22" stroke="#eee" fill="none" />
    </g>
  ),
  lock: (
    <g>
      <path d="M7 11V7a5 5 0 0 1 10 0v4" fill="none" stroke="#7a7a7a" strokeWidth="2" />
      <rect x="4.500" y="10.500" width="15" height="12.500" rx="2" fill="#7d7d7d" />
    </g>
  ),
  chat: (
    <g>
      <path d="M12 1.500c6 0 11 4 11 9.500s-5 9.500-11 9.500c-1 0-2 0-3-.3L5 23.500l.500-5C2.800 16.600 1 14 1 11c0-5.500 5-9.500 11-9.500z" fill="#5c6670" />
      <circle cx="7" cy="11" r="1.700" fill="#fff" /><circle cx="12" cy="11" r="1.700" fill="#fff" /><circle cx="17" cy="11" r="1.700" fill="#fff" />
    </g>
  ),
  crosshair: (
    <g>
      <path d="M5 2c3-1 7 1 10 6s6 8 5 12c-3 3-8 3-11-2S3 7 5 2z" fill="#999" stroke="#333" />
      <path d="M7 5l10 14M5 12l10 8M12 4l7 10" stroke="#fff" />
      <path d="M19 3l3-2M21 7l2-1" stroke="#555" />
    </g>
  ),
  search: (
    <g fill="none" stroke="#999" strokeWidth="1.600">
      <circle cx="10" cy="9" r="7" />
      <path d="M15 15l7 8" />
    </g>
  ),
};

const Ico = ({ n, s = 24 }) => (
  <svg width={s} height={s} viewBox="0 0 24 24" aria-hidden="true">{I[n]}</svg>
);
const Tool = ({ n, off, on, s, w }) => <Btn $off={off} $on={on} $w={w}><Ico n={n} s={s || 24} /></Btn>;
const Handle = ({ w }) => <HandleBox $w={w}><HandleDots /></HandleBox>;
const Tick = () => <svg width="12" height="12" viewBox="0 0 12 12"><path d="M2.500 6l2.500 3.500L9.500 2" fill="none" stroke="#000" strokeWidth="2" /></svg>;

/* ---------- map ---------- */
const Coast = () => (
  <svg width="776" height="562" viewBox="175 169 776 562" shapeRendering="crispEdges">
    <g transform="translate(180 190) scale(.33333)">
      <path d="M40 1035L100 1028L110 1050L130 1060L165 1070L167 1078L130 1080L125 1110L100 1135L75 1140L55 1165L40 1175z" />
      <path d="M1080 40L1088 42L1090 58L1120 70L1105 120L1098 190L1085 265L1070 350L1062 400L1058 463L1022 466L1030 510L1040 565L1050 600L1060 630L1075 660L1100 680L1115 695L1135 690L1155 703L1138 735L1150 760L1175 805L1165 850L1150 905L1145 925L1110 935L1102 915L1088 875L1060 870L1050 885L1000 885L965 900L945 920L935 950L945 985L975 992L960 1000L945 990L905 968L925 940L925 890L960 855L980 820L995 800L990 745L1010 710L995 665L1005 630L990 570L985 490L960 462L985 420L978 410L980 340L1000 280L1020 230L1018 210L1040 150L1048 70L1072 55z" />
      <path d="M1000 998L980 1010L955 1057L945 1045L890 1055L862 1068L855 1100L830 1110L800 1140L780 1140L730 1150L715 1168L712 1155L730 1142L790 1130L830 1105L800 1100L770 1085L750 1080L780 1055L830 1035L900 1020L950 1000z" />
      <path d="M708 1170L702 1197L692 1217L662 1230L650 1264L642 1287L622 1312L592 1340L580 1344L550 1332L520 1314L480 1306L445 1314L434 1337L420 1350L392 1350L384 1367L373 1350L340 1334L300 1328L270 1330L240 1350L200 1370L165 1380L154 1394L148 1410L110 1426L85 1438L50 1438L38 1430L85 1426L105 1413L138 1398L148 1376L165 1364L200 1354L240 1333L265 1318L300 1313L340 1310L360 1283L410 1263L467 1266L460 1278L430 1290L400 1320L390 1335L415 1333L428 1313L445 1301L480 1294L510 1298L545 1323L585 1330L608 1303L628 1283L638 1272L610 1254L643 1246L658 1216L688 1206L698 1183z" />
      <path d="M828 1340L845 1318L862 1315L860 1335L840 1350z" />
      <path d="M840 1335L850 1322L854 1325L846 1338z" fill="#fff" />
      <path d="M870 1318h8v8h-8zM818 1330h5v3h-5z" />
      <ellipse cx="1065" cy="826" rx="34" ry="10" fill="#fff" />
      <path d="M1118 925L1130 900L1148 900L1145 922z" fill="#fff" />
      <path d="M978 996L995 996L985 1010z" fill="#fff" />
    </g>
    <g transform="translate(420 400) scale(.33333)">
      <path d="M445 62H470L460 68H445z" />
      <path
        fill="none" stroke="#000" strokeWidth="6"
        d="M640 205L652 175L682 145L660 120L655 105L670 85L685 60L700 80L740 80L780 62L800 70L820 90L855 70L900 85L930 60L945 62L925 80L905 90L915 125L935 135L935 170L975 200L1000 205L1010 195L1050 207L1065 200L1065 172L1085 172L1095 240L1085 275L1040 305L1000 320L995 360L1008 390L1005 405L970 395L945 375L930 412L910 415L888 405L888 380L898 370L885 340L830 320L790 325L765 300L760 270L700 255L688 240L700 220L735 205L650 215L630 225L610 210L590 175L555 210L575 235L595 210"
      />
      <path d="M640 205L742 197L742 210L700 225L690 252L680 235L660 225L635 225z" />
      <path d="M930 165L975 200L1003 205L995 248L970 235L955 205z" />
      <path d="M690 255L760 262L765 290L745 273z" />
      <path d="M770 315L830 310L885 335L890 352L830 325L790 332z" />
      <path d="M995 320L1040 303L1085 275L1050 310L1005 325L998 360z" />
      <path d="M940 372L1005 395L1005 405L965 397L940 388z" />
      <path d="M650 108L662 92L666 122zM665 150L680 135L683 150L668 165zM815 88L835 85L830 98L820 97z" />
      <path d="M800 355L822 352L822 365L805 380z" />
      <path d="M495 222L523 225L516 262L505 245z" />
      <path d="M508 228h6v8h-6z" fill="#fff" />
      <path fill="none" stroke="#000" strokeWidth="6" d="M598 315L620 300L655 285L652 325L655 352L640 352L635 328L605 325zM1150 388L1168 360L1172 370L1155 392zM278 476L322 470L326 487L282 485z" />
      <path d="M1180 350h8v5h-8zM340 487L362 505L355 508L338 495z" />
    </g>
  </svg>
);

/* ---------- data ---------- */
const menus = [
  ["プロジェクト", "J", 79, -.7], ["編集", "E", 51, 0], ["ビュー", "V", 53, -1], ["レイヤ", "L", 57, -.4], ["設定", "S", 51, 0], ["プラグイン", "P", 73, -.8],
  ["ベクタ", "O", 59, -.3], ["ラスタ", "R", 55, -.5], ["データベース", "D", 83, -1.2], ["Web", "W", 57, 0], ["メッシュ", "M", 67, -.6], ["プロセシング", "C", 85, -.8], ["ヘルプ", "H", 60, -.3],
];
const browser = [
  ["star", "お気に入り", 0, .91], ["bookmark", "空間ブックマーク", 1, .86], ["home", "ホーム", 1, .82], ["folder", "C:¥", 1], ["folder", "D:¥", 1], ["folder", "E:¥", 1],
  ["geopkg", "GeoPackage", 0], ["spatial", "SpatiaLite", 0], ["pg", "PostGIS", 1], ["mssql", "MSSQL", 0], ["db2", "DB2", 0], ["wms", "WMS/WMTS", 2],
];
const algos = [["Plots"], ["Raster creation"], ["Vector tiles"], ["データベース", .78], ["ネットワーク解析", .86], ["ファイルツール", .8], ["ベクタオーバーレイ", .81], ["ベクタジオメトリ", .81], ["ベクタテーブル", .8], ["ベクター般", .85]];

const HScroll = ({ a, b, c, As = HBar }) => (
  <As>
    <ScrollEnd $h $dir="left" /><Track $g={a} /><Track $g={b} $thumb /><Track $g={c} /><ScrollEnd $h $dir="right" />
  </As>
);
const Dock2Btns = () => (
  <DockBtns>
    <DockBtn><svg width="9" height="9" viewBox="0 0 9 9"><path d="M3 .5h5.500V6H3zM.5 3H6v5.500H.5z" fill="#f4f4f4" stroke="#444" /></svg></DockBtn>
    <DockBtn><svg width="9" height="9" viewBox="0 0 9 9"><path d="M1 1l7 7M8 1L1 8" stroke="#222" strokeWidth="1.600" /></svg></DockBtn>
  </DockBtns>
);

export default function App() {
  return (
    <>
      <Global />
      <Win>
        <TitleBar>
          <Ico n="win" s={17} />
          <TitleText><Lbl $sx={.98}>*無題のプロジェクト — QGIS</Lbl></TitleText>
          <WinBtn><svg width="11" height="11" viewBox="0 0 11 11"><path d="M0 5.500h11" stroke="#222" /></svg></WinBtn>
          <WinBtn><svg width="11" height="11" viewBox="0 0 11 11"><path d="M.5.500h10v10H.5z" fill="none" stroke="#222" /></svg></WinBtn>
          <WinBtn><svg width="12" height="12" viewBox="0 0 12 12"><path d="M.5.500l11 11M11.500.500l-11 11" stroke="#222" /></svg></WinBtn>
        </TitleBar>
        <MenuBar>
          {menus.map(([t, k, w, ls]) => <MenuItem key={k} $w={w} $ls={ls}>{t}(<u>{k}</u>)</MenuItem>)}
        </MenuBar>
        <ToolRow $h={38}>
          <Handle w={13} />
          {["new", "open", "save", "layout", "mgr", "style"].map(n => <Tool key={n} n={n} />)}
          <Handle w={16} />
          <Tool n="hand" /><Tool n="pansel" /><Tool n="zin" /><Tool n="zout" /><Tool n="zfull" />
          <Tool n="zsel" off /><Tool n="zlayer" /><Tool n="znat" /><Tool n="zlast" /><Tool n="znext" off />
          <Tool n="newmap" /><Tool n="newbm" /><Tool n="showbm" /><Tool n="clock" /><Tool n="refresh" />
          <Handle w={16} />
          <Tool n="identify" on /><Tool n="table" off /><Tool n="abacus" off /><Tool n="gear" on /><Tool n="sigma" />
          <Tool n="ruler" /><Drop />
          <Tool n="note" />
          <Tool n="action" off /><Drop $off />
          <Tool n="textnote" /><Drop />
        </ToolRow>
        <ToolRow $h={39}>
          <Handle w={13} />
          {["dsm", "gpkg", "shp", "feather", "chip"].map(n => <Tool key={n} n={n} />)}
          <Sep $w={6} />
          <Tool n="vedit" />
          <Sep $w={8} />
          <Handle w={14} />
          <Tool n="pencils" off /><Tool n="pencil" off /><Tool n="saveedit" off />
          <More>»</More>
          <Handle w={13} />
          <Tool n="abc" off /><Tool n="pie" off />
          <Sep $w={10} />
          <Tool n="abpin" /><Tool n="abcred" />
          <Sep $w={8} />
          <Tool n="lblpin" off /><Tool n="lbleye" off /><Tool n="lblmove" off /><Tool n="lblrot" off /><Tool n="lbledit" off />
          <Handle w={16} />
          <Tool n="binoc" />
          <Handle w={17} />
          <Tool n="python" /><Tool n="wkt" />
          <Handle w={16} />
          <Tool n="help" />
          <Handle w={16} />
        </ToolRow>
        <ToolRow $h={38} $pt={2}>
          <Handle w={13} />
          <Tool n="rectpick" off />
          <Handle w={17} />
          <Tool n="select" off /><Drop $off />
          <Tool n="form" off /><Drop $off />
          <Tool n="deselect" /><Drop />
        </ToolRow>
        <Main>
          <Dock $pad="0 7px 0 1px">
            <DockHead $pt={3}><Lbl $sx={.92}>ブラウザ</Lbl><Dock2Btns /></DockHead>
            <PanelBar $h={32} $pl={2}>
              <Mini $w={25.5}><Ico n="add" s={17} /></Mini><Mini $w={25.5}><Ico n="refresh" s={17} /></Mini><Mini $w={25.5}><Ico n="filter" s={17} /></Mini><Mini $w={25.5}><Ico n="collapse" s={17} /></Mini><Mini $w={25.5}><Ico n="info" s={15} /></Mini>
            </PanelBar>
            <TreeFrame $h={245} $v $hs>
              <TreeList>
                {browser.map(([n, t, e, sx]) => (
                  <Row key={t}>
                    <Caret $none={e === 0} $open={e === 2} $w={21} $pr={3} />
                    <RowIcon><Ico n={n} s={16} /></RowIcon>
                    <Lbl $sx={sx}>{t}</Lbl>
                  </Row>
                ))}
                <Row>
                  <Caret $w={38} $pl={20} />
                  <RowIcon $mr={10}><Ico n="wmsitem" s={14} /></RowIcon>
                  AGINFO WMS
                </Row>
              </TreeList>
              <VBar>
                <ScrollEnd $dir="up" /><Track $g={97} /><Track $g={107} $thumb /><ScrollEnd $dir="down" />
              </VBar>
              <HScroll a={97} b={28} c={0} />
            </TreeFrame>
            <Splitter />
            <DockHead><Lbl>レイヤ</Lbl><Dock2Btns /></DockHead>
            <PanelBar $pl={1}>
              <Mini><Ico n="brush" s={17} /></Mini><Mini $w={26}><Ico n="clip" s={17} /></Mini><Mini><Ico n="eye" s={18} /></Mini>
              <Mini $w={26}><Ico n="filter" s={17} /></Mini><Mini $off $w={26}><Ico n="epsilon" s={16} /></Mini><Drop $off $w={10} /><More $w={14} $ml={15}>»</More>
            </PanelBar>
            <TreeFrame $grow $hs>
              <TreeList>
                <Row $sel>
                  <Caret $open $white $w={22} />
                  <RowCheck $on><Tick /></RowCheck>
                  <RowIcon $mr={4}><Ico n="rasterB" s={14} /></RowIcon>
                  <Underlined>PG:dbname=raster</Underlined>
                </Row>
                <Row $indent={42}><Swatch />1</Row>
                <Row $indent={42}><SwatchGap />2</Row>
                <Row $dim><Caret $open $w={22} /><RowCheck /><RowIcon $mr={4}><Ico n="rasterB" s={14} /></RowIcon>dem</Row>
                <Row $indent={42}><Swatch />0</Row>
                <Row $indent={42}><SwatchGap />347.4</Row>
              </TreeList>
              <HScroll a={50} b={88} c={0} />
            </TreeFrame>
          </Dock>
          <Canvas><Coast /></Canvas>
          <Dock $pad="0 1px 0 6px">
            <DockHead $pl={4} $pr={2} $pt={2}><Lbl $sx={.83}>プロセシングツールボックス</Lbl><Dock2Btns /></DockHead>
            <PanelBar $h={31} $pl={3}>
              <Mini><Ico n="procrun" s={18} /></Mini><Mini><Ico n="pyarrow" s={17} /></Mini><Mini><Ico n="clock" s={16} /></Mini><Mini><Ico n="doc" s={16} /></Mini>
              <MiniSep $w={7} />
              <Mini $off><Ico n="editproc" s={16} /></Mini>
              <MiniSep $w={7} />
              <Mini><Ico n="wrench" s={17} /></Mini>
            </PanelBar>
            <SearchBox $mt={1}><Ico n="search" s={14} /><span>検索...</span></SearchBox>
            <TreeFrame $h={193} $v>
              <TreeList $pt={1}>
                <Row><Caret $w={21} /><RowIcon $mr={8}><Ico n="clock" s={16} /></RowIcon><Lbl $sx={.87}>最近使ったツール</Lbl></Row>
                {algos.map(([t, sx]) => <Row key={t}><Caret $w={21} /><RowIcon $mr={8}><Ico n="q" s={16} /></RowIcon><Lbl $sx={sx}>{t}</Lbl></Row>)}
              </TreeList>
              <VBar>
                <ScrollEnd $dir="up" /><Track $g={67} /><Track $g={99} $thumb /><ScrollEnd $dir="down" />
              </VBar>
            </TreeFrame>
            <Splitter />
            <DockHead $pl={4} $pr={2} $pt={2}><Lbl>地物情報</Lbl><Dock2Btns /></DockHead>
            <PanelBar $h={31} $pl={2}>
              <Mini $off $w={24}><Ico n="tree" s={16} /></Mini>
              <MiniSep $w={10} />
              <Mini $w={26}><Ico n="expand" s={17} /></Mini><Mini $w={26}><Ico n="collapse" s={17} /></Mini><Mini $w={26}><Ico n="staron" s={17} /></Mini>
              <MiniSep $w={6} />
              <Mini $w={24}><Ico n="deselect" s={16} /></Mini>
              <MiniSep $w={6} />
              <Mini $off $w={24}><Ico n="copy" s={15} /></Mini><Mini $off $w={26}><Ico n="print" s={16} /></Mini>
              <MiniSep $w={7} />
              <More $w={14} $ml={30} $c="#999">»</More>
            </PanelBar>
            <Table>
              <TableHead><HeadCell>地物</HeadCell><HeadCell $w={19}>値</HeadCell></TableHead>
              <TableBody />
              <HScroll a={183} b={54} c={0} As={TableScroll} />
            </Table>
            <FormRow $h={36}>
              <FormLabel $w={39}><Lbl $sx={.8}>モード</Lbl></FormLabel>
              <Combo $mr={4}>Current Layer</Combo>
            </FormRow>
            <FormRow $h={26}>
              <FormLabel $w={37}><Lbl $sx={.8}>ビュー</Lbl></FormLabel>
              <Combo $w={72} $h={21}><Lbl $sx={.85}>ツリー</Lbl></Combo>
              <PushBtn>ヘルプ</PushBtn>
            </FormRow>
          </Dock>
        </Main>
        <StatusBar>
          <SearchBox $w={199} $ml={4} $h={21}><Ico n="search" s={14} /><span>検索(Ctrl + K)</span></SearchBox>
          <StatusText $ml={8} $w={255}>1 個の凡例エントリが削除されました</StatusText>
          <StatusText $w={25}>座標</StatusText>
          <Field $w={110} $pl={5}>133.35241,34.37520</Field>
          <StatusIcon $w={26}><Ico n="crosshair" s={16} /></StatusIcon>
          <StatusText $ml={7} $w={27}>縮尺</StatusText>
          <Field $w={77} $ls={0.4}>1:23371<FieldDrop /></Field>
          <StatusIcon $w={36}><Ico n="lock" s={15} /></StatusIcon>
          <StatusText $ml={-2} $w={27}>拡大</StatusText>
          <Field $w={87}>100%<Spin /></Field>
          <StatusText $ml={9} $w={31}>回転</StatusText>
          <Field $w={82}>0.0°<Spin /></Field>
          <StatusCheck $ml={7}><Tick /></StatusCheck>
          <StatusText $ml={5} $w={25}><Lbl $sx={.85}>レンダ</Lbl></StatusText>
          <StatusIcon $ml={14} $w={17}><Ico n="epsg" s={15} /></StatusIcon>
          <StatusText $ml={4} $w={60} $ls={0.2}>EPSG:4612</StatusText>
          <StatusIcon $ml={9} $w={18}><Ico n="chat" s={17} /></StatusIcon>
        </StatusBar>
      </Win>
    </>
  );
}
